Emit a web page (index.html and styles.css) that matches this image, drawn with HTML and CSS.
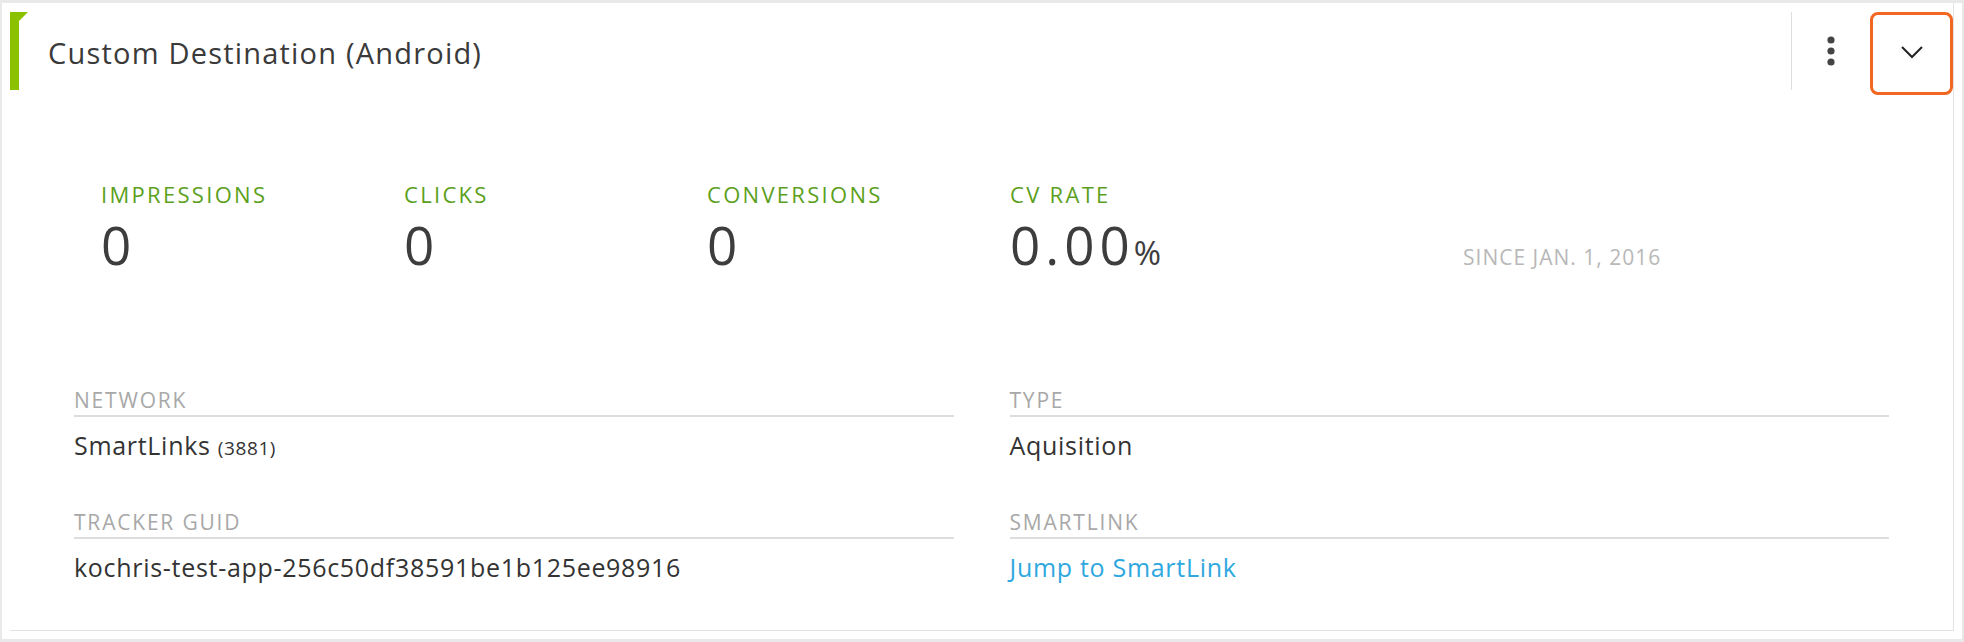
FILE: index.html
```html
<!DOCTYPE html>
<html>
<head>
<meta charset="utf-8">
<link rel="stylesheet" href="styles.css">
</head>
<body>
<div class="card">
  <div class="inner">
    <div class="header">
      <svg class="flag" width="18" height="78" viewBox="0 0 18 78"><polygon points="0,0 18,0 9,9 9,78 0,78" fill="#8cc100"/></svg>
      <div class="title">Custom Destination (Android)</div>
      <div class="divider"></div>
      <div class="dots">
        <svg width="10" height="30" viewBox="0 0 10 30"><circle cx="5" cy="4" r="3.6" fill="#444"/><circle cx="5" cy="15" r="3.6" fill="#444"/><circle cx="5" cy="26" r="3.6" fill="#444"/></svg>
      </div>
      <div class="toggle">
        <svg width="24" height="16" viewBox="0 0 24 16"><polyline points="2,3 12,13 22,3" fill="none" stroke="#222" stroke-width="2"/></svg>
      </div>
    </div>
    <div class="metrics">
      <div class="metric"><div class="m-label">IMPRESSIONS</div><div class="m-value">0</div></div>
      <div class="metric"><div class="m-label">CLICKS</div><div class="m-value">0</div></div>
      <div class="metric"><div class="m-label">CONVERSIONS</div><div class="m-value">0</div></div>
      <div class="metric"><div class="m-label">CV RATE</div><div class="m-value">0.00<span class="pct">%</span></div></div>
      <div class="since">SINCE JAN. 1, 2016</div>
    </div>
    <div class="details">
      <div class="field"><div class="f-label">NETWORK</div><div class="f-value">SmartLinks <span class="small">(3881)</span></div></div>
      <div class="field"><div class="f-label">TYPE</div><div class="f-value">Aquisition</div></div>
      <div class="field"><div class="f-label">TRACKER GUID</div><div class="f-value">kochris-test-app-256c50df38591be1b125ee98916</div></div>
      <div class="field"><div class="f-label">SMARTLINK</div><div class="f-value link">Jump to SmartLink</div></div>
    </div>
  </div>
</div>
</body>
</html>
```
FILE: styles.css
```css
html, body {
  margin: 0;
  padding: 0;
  background: #e9e9e9;
}
body {
  font-family: "Open Sans", "Liberation Sans", sans-serif;
  color: #333;
}
.card {
  margin: 3px 2px;
  height: 636px;
  box-sizing: border-box;
  padding: 0 8px 8px 8px;
  background: #fff;
}
.inner {
  height: 100%;
  box-sizing: border-box;
  border-right: 1px solid #e2e2e2;
  border-bottom: 1px solid #e2e2e2;
}
.header {
  display: flex;
  align-items: flex-start;
  padding-top: 9px;
  height: 83px;
}
.flag {
  display: block;
  flex: none;
}
.title {
  flex: 1;
  margin-left: 20px;
  padding-top: 2px;
  font-size: 29px;
  line-height: 78px;
  letter-spacing: 1.2px;
  color: #3a3a3a;
}
.divider {
  width: 1px;
  height: 78px;
  background: #dedede;
}
.dots {
  width: 78px;
  height: 78px;
  display: flex;
  align-items: center;
  justify-content: center;
}
.dots svg { display: block; }
.toggle {
  width: 83px;
  height: 83px;
  box-sizing: border-box;
  border: 3px solid #f26722;
  border-radius: 8px;
  display: flex;
  align-items: center;
  justify-content: center;
}
.toggle svg { display: block; margin-top: -4px; }
.metrics {
  display: flex;
  align-items: flex-start;
  padding-left: 91px;
  margin-top: 86px;
}
.metric {
  width: 303px;
}
.m-label {
  font-size: 22px;
  line-height: 26px;
  letter-spacing: 2.3px;
  color: #5c9f1c;
}
.m-value {
  margin-top: 8px;
  font-size: 53px;
  line-height: 60px;
  letter-spacing: 5px;
  color: #3d3d3d;
}
.pct {
  font-size: 33px;
  line-height: 1;
  letter-spacing: 0;
  margin-left: -1px;
}
.since {
  margin-left: 150px;
  margin-top: 63px;
  font-size: 21px;
  line-height: 26px;
  letter-spacing: 1px;
  color: #b8b8b8;
}
.details {
  display: grid;
  grid-template-columns: 1fr 1fr;
  column-gap: 56px;
  row-gap: 50px;
  padding: 0 64px;
  margin-top: 113px;
}
.f-label {
  font-size: 21px;
  line-height: 24px;
  letter-spacing: 1.8px;
  color: #a8a8a8;
  padding-bottom: 3px;
  border-bottom: 2px solid #dddddd;
}
.f-value {
  margin-top: 13px;
  font-size: 25px;
  line-height: 30px;
  letter-spacing: 0.7px;
  color: #333;
}
.small {
  font-size: 19px;
  line-height: 1;
  letter-spacing: 0.6px;
}
.link {
  color: #2ea8df;
}
```
